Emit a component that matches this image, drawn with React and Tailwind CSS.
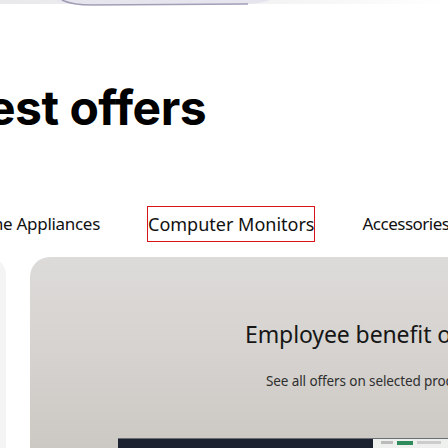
export default function App() {
  return (
    <div className="relative w-[448px] h-[448px] overflow-hidden bg-white" style={{ fontFamily: '"Noto Sans", sans-serif' }}>
      {/* top image fragment */}
      <div className="h-[10px] w-full overflow-hidden">
        <svg width="448" height="10" viewBox="0 0 448 10">
          <defs>
            <linearGradient id="tg" x1="0" x2="1" y1="0" y2="0">
              <stop offset="0" stopColor="#e9e9ec" />
              <stop offset="0.6" stopColor="#f3f3f4" />
              <stop offset="1" stopColor="#ffffff" />
            </linearGradient>
          </defs>
          <rect x="0" y="0" width="448" height="4" fill="url(#tg)" />
          <path d="M55 0 Q70 5 90 5 L250 4 Q262 3 270 0 Z" fill="#e6e5ee" />
          <path d="M62 0 Q72 5 92 5 L248 4" stroke="#8e8aa8" strokeWidth="1.5" fill="none" opacity="0.8" />
        </svg>
      </div>

      {/* heading */}
      <h1
        className="mt-[70px] ml-[-13px] whitespace-nowrap text-[48px] leading-[56px] font-bold text-black tracking-[-0.5px]"
        style={{ fontFamily: 'Inter, sans-serif' }}
      >
        est offers
      </h1>

      {/* tabs */}
      <div className="mt-[71px] flex items-center gap-[50px] whitespace-nowrap text-[18px] text-[#111] ml-[-52px]">
        <span className="w-[152px] shrink-0 text-right text-[17px] tracking-[-0.3px]">Home Appliances</span>
        <span className="ml-[-2px] outline outline-1 outline-[#d8141b] leading-[34px]">Computer Monitors</span>
        <span className="ml-[-2px] text-[17px] tracking-[-0.5px]">Accessories</span>
      </div>

      {/* cards */}
      <div className="mt-[16px] flex gap-[24px] ml-[-200px]">
        <div className="w-[206px] h-[200px] shrink-0 rounded-tr-[18px] bg-[#f4f4f4]" />
        <div className="relative w-[686px] h-[200px] shrink-0 rounded-tl-[20px] bg-gradient-to-b from-[#dddbd9] via-[#d5d2cf] to-[#cbc8c3] overflow-hidden">
          <div className="flex flex-col items-start pt-[62px]">
            <div className="ml-[215px] text-[23px] leading-[30px] tracking-[-0.1px] text-[#161616] whitespace-nowrap">Employee benefit offers</div>
            <div className="ml-[236px] mt-[22px] text-[13.5px] leading-[20px] tracking-[-0.1px] text-[#2e2e2e] whitespace-nowrap">See all offers on selected products</div>
          </div>
          {/* monitor */}
          <div className="absolute left-[88px] top-[181px] w-[600px] h-[40px] bg-[#1d2230] border-t border-[#6b6d75] flex">
            <div className="ml-[255px] flex-1 h-full bg-[#eef0ee] flex items-start gap-1 px-2 pt-[2px]">
              <div className="w-3 h-[3px] bg-[#bbb]" />
              <div className="w-4 h-[4px] bg-[#2f8a5c]" />
              <div className="w-6 h-[3px] bg-[#ccc]" />
            </div>
          </div>
        </div>
      </div>
    </div>
  );
}
